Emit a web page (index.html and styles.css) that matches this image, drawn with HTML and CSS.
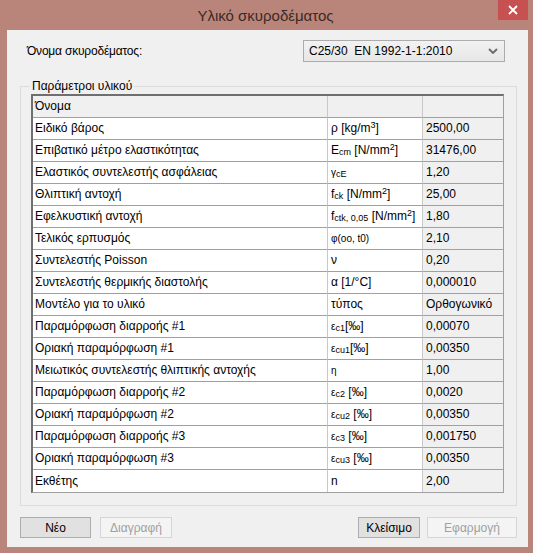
FILE: index.html
```html
<!DOCTYPE html>
<html>
	<head>
		<title>Υλικό σκυροδέματος</title>
		<meta charset="UTF-8">
		<link rel="stylesheet" href="styles.css">
	</head>
	<body>
		<div class="window">
			<div class="titlebar">
				<span class="title">Υλικό σκυροδέματος</span>
				<div class="close">
					<svg width="10" height="10" viewBox="0 0 10 10"><path d="M1 1L9 9M9 1L1 9" stroke="#fff" stroke-width="1.8"/></svg>
				</div>
			</div>
			<div class="client">
				<div class="name-row">
					<label class="name-label">Όνομα σκυροδέματος:</label>
					<div class="select">
						<span>C25/30&nbsp; EN 1992-1-1:2010</span>
						<svg width="10" height="6" viewBox="0 0 10 6"><path d="M1 1L5 5L9 1" fill="none" stroke="#6a6a6a" stroke-width="1.8"/></svg>
					</div>
				</div>
				<fieldset class="params">
					<legend>Παράμετροι υλικού</legend>
					<div class="grid">
						<table>
							<colgroup>
								<col class="c-name">
								<col class="c-sym">
								<col class="c-val">
							</colgroup>
							<tr class="head"><td>Όνομα</td><td></td><td></td></tr>
							<tr><td>Ειδικό βάρος</td><td>ρ [kg/m<sup>3</sup>]</td><td>2500,00</td></tr>
							<tr><td>Επιβατικό μέτρο ελαστικότητας</td><td>E<sub>cm</sub> [N/mm<sup>2</sup>]</td><td>31476,00</td></tr>
							<tr><td>Ελαστικός συντελεστής ασφάλειας</td><td><span class="small">γ<sub>cE</sub></span></td><td>1,20</td></tr>
							<tr><td>Θλιπτική αντοχή</td><td>f<sub>ck</sub> [N/mm<sup>2</sup>]</td><td>25,00</td></tr>
							<tr><td>Εφελκυστική αντοχή</td><td>f<sub>ctk, 0,05</sub> [N/mm<sup>2</sup>]</td><td>1,80</td></tr>
							<tr><td>Τελικός ερπυσμός</td><td><span class="small">φ(oo, t0)</span></td><td>2,10</td></tr>
							<tr><td>Συντελεστής Poisson</td><td>ν</td><td>0,20</td></tr>
							<tr><td>Συντελεστής θερμικής διαστολής</td><td>α [1/°C]</td><td>0,000010</td></tr>
							<tr><td>Μοντέλο για το υλικό</td><td>τύπος</td><td>Ορθογωνικό</td></tr>
							<tr><td>Παραμόρφωση διαρροής #1</td><td><span class="small">ε<sub>c1</sub></span>[‰]</td><td>0,00070</td></tr>
							<tr><td>Οριακή παραμόρφωση #1</td><td><span class="small">ε<sub>cu1</sub></span>[‰]</td><td>0,00350</td></tr>
							<tr><td>Μειωτικός συντελεστής θλιπτικής αντοχής</td><td><span class="small">η</span></td><td>1,00</td></tr>
							<tr><td>Παραμόρφωση διαρροής #2</td><td><span class="small">ε<sub>c2</sub></span> [‰]</td><td>0,0020</td></tr>
							<tr><td>Οριακή παραμόρφωση #2</td><td><span class="small">ε<sub>cu2</sub></span> [‰]</td><td>0,00350</td></tr>
							<tr><td>Παραμόρφωση διαρροής #3</td><td><span class="small">ε<sub>c3</sub></span> [‰]</td><td>0,001750</td></tr>
							<tr><td>Οριακή παραμόρφωση #3</td><td><span class="small">ε<sub>cu3</sub></span> [‰]</td><td>0,00350</td></tr>
							<tr><td>Εκθέτης</td><td>n</td><td>2,00</td></tr>
						</table>
					</div>
				</fieldset>
				<div class="buttons">
					<div class="btn-group">
						<button class="btn btn-new">Νέο</button>
						<button class="btn btn-delete disabled">Διαγραφή</button>
					</div>
					<div class="btn-group">
						<button class="btn btn-shut">Κλείσιμο</button>
						<button class="btn btn-apply disabled">Εφαρμογή</button>
					</div>
				</div>
			</div>
		</div>
	</body>
</html>
```
FILE: styles.css
```css
* {
	box-sizing: border-box;
}
body {
	margin: 0;
	background: #b9857a;
	font-family: "Liberation Sans", Arial, sans-serif;
	font-size: 12px;
	color: #000;
}
.window {
	width: 533px;
	height: 553px;
	display: flex;
	flex-direction: column;
	background: #b9857a;
}
.titlebar {
	position: relative;
	height: 30px;
	display: flex;
	justify-content: center;
	align-items: center;
}
.title {
	font-size: 15px;
	color: #3d2a25;
	margin-right: 2px;
}
.close {
	position: absolute;
	top: 0;
	right: 5px;
	width: 30px;
	height: 20px;
	background: #c75050;
	display: flex;
	justify-content: center;
	align-items: center;
}
.client {
	flex: 1;
	margin: 0 5px 6px 7px;
	background: #f0f0f0;
	padding: 10px 11px 0 13px;
	display: flex;
	flex-direction: column;
}
.name-row {
	display: flex;
	justify-content: space-between;
	align-items: center;
	height: 22px;
	padding-left: 7px;
	margin-right: 12px;
}
.name-label {
	letter-spacing: -0.2px;
}
.select {
	width: 202px;
	height: 22px;
	border: 1px solid #acacac;
	background: linear-gradient(#f2f2f2, #e7e7e7);
	display: flex;
	justify-content: space-between;
	align-items: center;
	padding: 0 6px 0 5px;
}
.params {
	margin: 17px 0 0 0;
	padding: 1px 12px 12px 10px;
	border: 1px solid #dcdcdc;
	min-width: 0;
}
.params legend {
	padding: 0 2px;
	margin-left: -1px;
	line-height: 14px;
}
.grid {
	width: 473px;
	border-top: 2px solid #6f6f6f;
	border-left: 2px solid #6f6f6f;
	border-right: 1px solid #a0a0a0;
	border-bottom: 1px solid #a0a0a0;
	background: #fff;
}
table {
	width: 470px;
	table-layout: fixed;
	border-collapse: separate;
	border-spacing: 0;
}
.c-name {
	width: 295px;
}
.c-sym {
	width: 95px;
}
.c-val {
	width: 80px;
}
td {
	height: 22px;
	line-height: 21px;
	padding: 0 0 0 3px;
	border-bottom: 1px solid #a0a0a0;
	border-right: 1px solid #c8c8c8;
	white-space: nowrap;
	overflow: hidden;
	background: #fff;
}
td:first-child {
	padding-left: 2px;
}
td:last-child {
	border-right: none;
	background: #f0f0f0;
}
tr:last-child td {
	border-bottom: none;
}
tr.head td {
	background: #f0f0f0;
}
sub, sup {
	font-size: 9px;
	line-height: 0;
}
sub {
	vertical-align: -1px;
}
sup {
	vertical-align: 4px;
}
.small {
	font-size: 10px;
}
.small sub {
	font-size: 9px;
}
.buttons {
	margin-top: 11px;
	display: flex;
	justify-content: space-between;
}
.btn-group {
	display: flex;
	gap: 9px;
}
.btn {
	height: 21px;
	border: 1px solid #adadad;
	background: #e1e1e1;
	font-family: inherit;
	font-size: 12px;
	color: #000;
	padding: 0;
	outline: none;
}
.btn.disabled {
	border-color: #d5d5d5;
	background: #f4f4f4;
	color: #a0a0a0;
}
.btn-new {
	width: 71px;
}
.btn-delete {
	width: 72px;
}
.btn-shut {
	width: 62px;
}
.btn-apply {
	width: 90px;
}
.btn-group:last-child {
	gap: 7px;
}
```
